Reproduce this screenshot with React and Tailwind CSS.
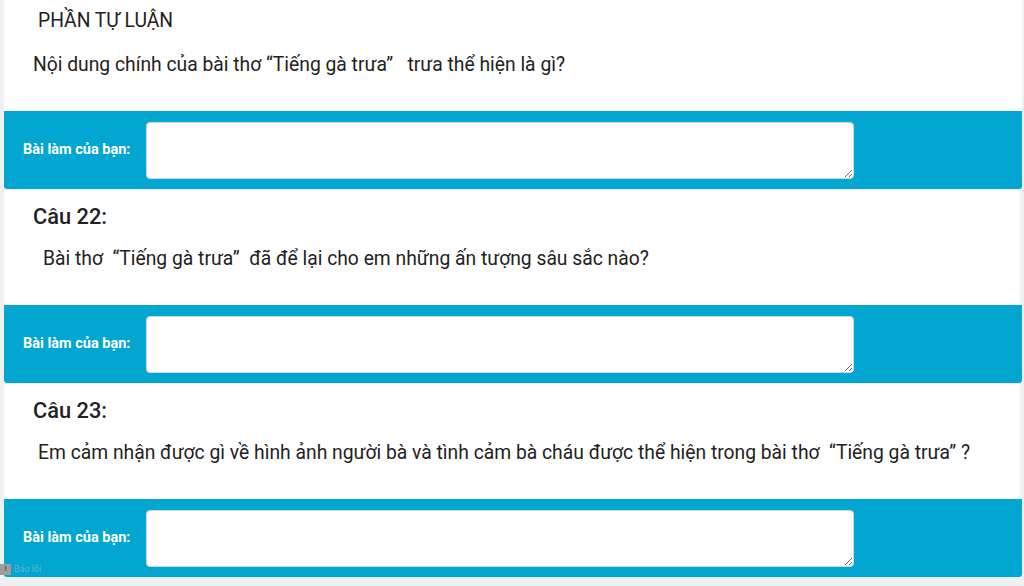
const Answer = () => (
  <div className="flex h-[78px] items-center rounded-b-[3px] bg-[#02a6d0] pl-[19px]">
    <span className="w-[123px] text-[14.5px] font-bold text-white">Bài làm của bạn:</span>
    <textarea className="h-[57px] w-[708px] rounded-[4px] border border-[#cfd8dc] bg-white outline-none" />
  </div>
);

export default function App() {
  return (
    <div
      className="h-[586px] overflow-hidden bg-[#eef0f4] pl-[4px] pr-[2px] text-[#222]"
      style={{fontFamily: "Roboto, 'Noto Sans', sans-serif"}}
    >
      <div className="h-[111px] bg-white pl-[34px] pt-[8px]">
        <div className="text-[19.3px] leading-[25px]">PHẦN TỰ LUẬN</div>
        <div className="mt-[19px] -ml-[5px] text-[19.3px] leading-[25px] whitespace-pre">
          Nội dung chính của bài thơ “Tiếng gà trưa”   trưa thể hiện là gì?
        </div>
      </div>
      <Answer/>

      <div className="mt-[1px] h-[115px] bg-white pl-[29px] pt-[12px] mr-[2px]">
        <div className="text-[21.8px] font-medium leading-[29px]">Câu 22:</div>
        <div className="mt-[15px] pl-[10px] text-[19.3px] leading-[25px] whitespace-pre">
          Bài thơ  “Tiếng gà trưa”  đã để lại cho em những ấn tượng sâu sắc nào?
        </div>
      </div>
      <Answer/>

      <div className="mt-[1px] h-[115px] bg-white pl-[29px] pt-[12px] mr-[2px]">
        <div className="text-[21.8px] font-medium leading-[29px]">Câu 23:</div>
        <div className="mt-[15px] pl-[5px] text-[19.3px] leading-[25px] whitespace-pre">
          Em cảm nhận được gì về hình ảnh người bà và tình cảm bà cháu được thể hiện trong bài thơ  “Tiếng gà trưa” ?
        </div>
      </div>
      <div className="relative">
        <Answer/>
        <div className="absolute bottom-[1px] -left-[4px] flex items-center gap-[3px]">
          <span className="flex h-[11px] w-[11px] items-center justify-center bg-[#9e9e9e] text-[8px] font-bold text-[#555]">!</span>
          <span className="text-[9px] text-[#5fb8d4]">Báo lỗi</span>
        </div>
      </div>
    </div>
  );
}
